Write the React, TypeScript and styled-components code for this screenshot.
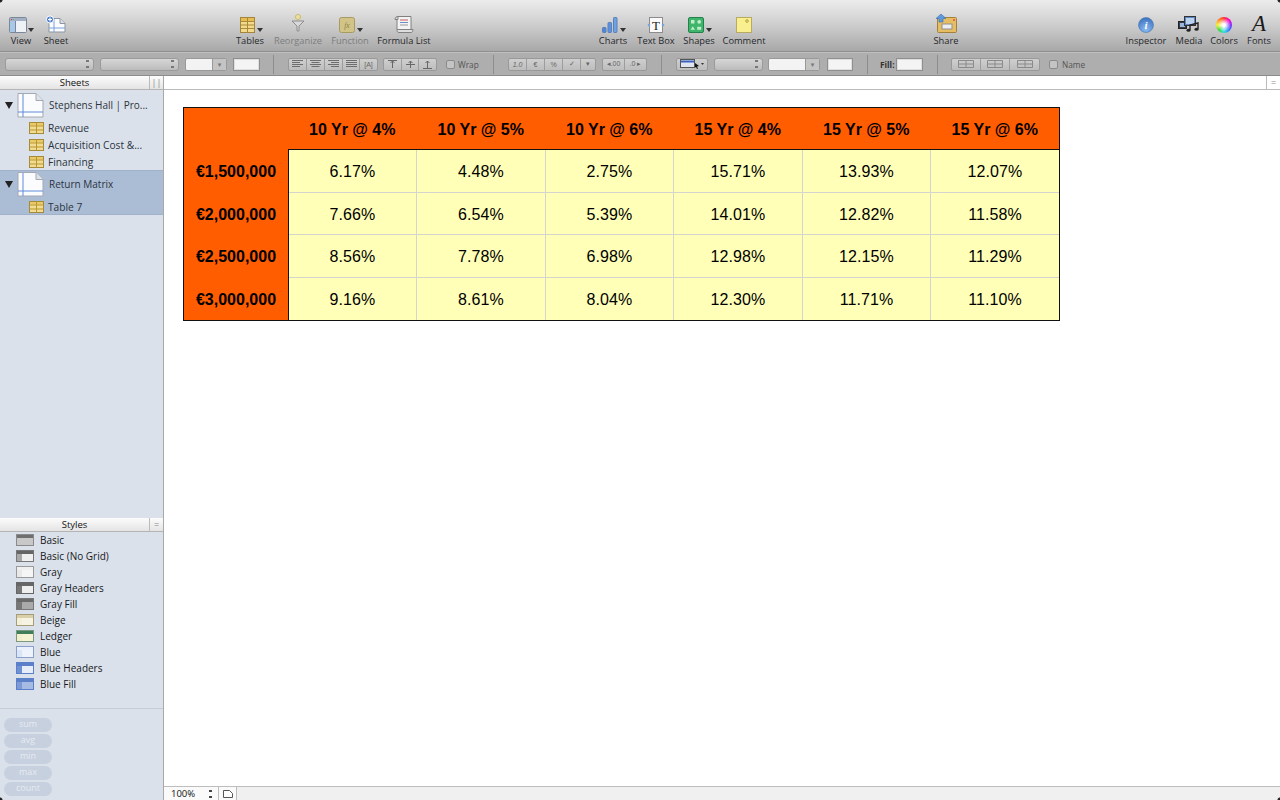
import React from 'react';
import styled, { createGlobalStyle } from 'styled-components';

const GlobalStyle = createGlobalStyle`
	html, body { margin: 0; padding: 0; background: #fff; overflow: hidden; }
	* { box-sizing: border-box; }
`;

const uiFont = `"Open Sans", "Noto Sans", "DejaVu Sans", sans-serif`;

const Window = styled.div`
	width: 1280px;
	height: 800px;
	position: relative;
	display: flex;
	flex-direction: column;
	font-family: ${uiFont};
	overflow: hidden;
	&::after {
		content: '';
		position: absolute;
		inset: 0;
		pointer-events: none;
		background:
			radial-gradient(circle at 0 0, #222 0 2px, transparent 3px),
			radial-gradient(circle at 100% 0, #222 0 2px, transparent 3px),
			radial-gradient(circle at 0 100%, #222 0 2px, transparent 3px),
			radial-gradient(circle at 100% 100%, #222 0 2px, transparent 3px);
	}
`;

const Toolbar = styled.header`
	height: 52px;
	flex: none;
	display: flex;
	padding-left: 3px;
	background: linear-gradient(#ececec 0%, #d0d0d0 45%, #a8a8a8 100%);
	border-bottom: 1px solid #8f8f8f;
`;

const ToolItem = styled.div<{ $w: number; $ml?: number; $off?: boolean }>`
	width: ${(p) => p.$w}px;
	margin-left: ${(p) => p.$ml ?? 0}px;
	flex: none;
	display: flex;
	flex-direction: column;
	align-items: center;
	color: ${(p) => (p.$off ? '#7d7d7d' : '#26272b')};
`;

const ToolIcon = styled.div<{ $caret?: boolean }>`
	height: 35px;
	width: 100%;
	display: flex;
	align-items: flex-end;
	justify-content: center;
	position: relative;
	padding-bottom: 2px;
	padding-right: ${(p) => (p.$caret ? 6 : 0)}px;
`;

const ToolLabel = styled.span`
	font-size: 9.3px;
	line-height: 11px;
	white-space: nowrap;
`;

const Caret = styled.i`
	position: absolute;
	left: 50%;
	bottom: 3px;
	margin-left: 7px;
	border: 3px solid transparent;
	border-top: 4px solid #333;
	border-bottom: 0;
`;

const FormatBar = styled.div`
	height: 24px;
	flex: none;
	display: flex;
	align-items: center;
	background: #aeaeae;
	border-top: 1px solid #c0c0c0;
	border-bottom: 1px solid #8c8c8c;
`;

const SelectBox = styled.div<{ $w: number; $ml: number }>`
	width: ${(p) => p.$w}px;
	margin-left: ${(p) => p.$ml}px;
	height: 13px;
	flex: none;
	position: relative;
	border: 1px solid #9b9b9b;
	border-radius: 3px;
	background: linear-gradient(#d6d6d6, #bcbcbc);
	&::after {
		content: '';
		position: absolute;
		right: 4px;
		top: 1px;
		width: 3px;
		height: 8px;
		background: linear-gradient(#777 0 30%, transparent 30% 70%, #777 70%);
	}
`;

const Combo = styled.div<{ $w: number; $ml: number }>`
	width: ${(p) => p.$w}px;
	margin-left: ${(p) => p.$ml}px;
	height: 13px;
	flex: none;
	display: flex;
	border: 1px solid #999;
	border-radius: 2px;
	overflow: hidden;
	background: #f3f3f3;
	&::after {
		content: '▾';
		margin-left: auto;
		width: 13px;
		font-size: 7px;
		line-height: 11px;
		text-align: center;
		color: #777;
		background: #c4c4c4;
		border-left: 1px solid #999;
	}
`;

const Swatch = styled.div<{ $w: number; $ml: number }>`
	width: ${(p) => p.$w}px;
	margin-left: ${(p) => p.$ml}px;
	height: 13px;
	flex: none;
	background: #f4f4f4;
	border: 1px solid #8f8f8f;
	box-shadow: inset 0 0 0 1px #dedede;
`;

const BarDivider = styled.div<{ $ml: number }>`
	width: 1px;
	height: 19px;
	flex: none;
	margin-left: ${(p) => p.$ml}px;
	background: #8d8d8d;
`;

const BtnGroup = styled.div<{ $ml: number }>`
	display: flex;
	flex: none;
	height: 13px;
	margin-left: ${(p) => p.$ml}px;
	border: 1px solid #999;
	border-radius: 2px;
	background: linear-gradient(#cfcfcf, #bdbdbd);
`;

const Btn = styled.div<{ $w: number }>`
	width: ${(p) => p.$w}px;
	display: flex;
	align-items: center;
	justify-content: center;
	font-size: 7px;
	color: #666;
	font-family: "Liberation Sans", sans-serif;
	white-space: nowrap;
	border-right: 1px solid #9d9d9d;
	&:last-child { border-right: 0; }
`;

const Check = styled.div<{ $ml: number }>`
	width: 9px;
	height: 9px;
	flex: none;
	margin-left: ${(p) => p.$ml}px;
	border: 1px solid #8b8b8b;
	border-radius: 2px;
	background: #c4c4c4;
`;

const BarText = styled.span<{ $ml: number; $w: number; $bold?: boolean }>`
	margin-left: ${(p) => p.$ml}px;
	width: ${(p) => p.$w}px;
	font-size: 8.3px;
	flex: none;
	white-space: nowrap;
	color: ${(p) => (p.$bold ? '#333' : '#555')};
	font-weight: ${(p) => (p.$bold ? 700 : 400)};
`;

const Body = styled.div`
	flex: 1;
	display: flex;
	min-height: 0;
`;

const Sidebar = styled.aside`
	width: 164px;
	flex: none;
	display: flex;
	flex-direction: column;
	background: #dbe1ea;
	border-right: 1px solid #a9a9a9;
`;

const PaneHead = styled.div`
	height: 14px;
	flex: none;
	position: relative;
	text-align: center;
	font-size: 9.5px;
	line-height: 13px;
	color: #111;
	padding-right: 14px;
	background: linear-gradient(#fcfcfc, #e4e4e4);
	border-bottom: 1px solid #b4b4b4;
`;

const PaneBtn = styled.div`
	position: absolute;
	top: 0;
	right: 0;
	width: 14px;
	height: 13px;
	border-left: 1px solid #bbb;
	color: #888;
	display: flex;
	align-items: center;
	justify-content: center;
	font-size: 9px;
	line-height: 1;
`;

const SheetList = styled.div`
	height: 428px;
	flex: none;
	padding-top: 1px;
`;

const Selected = styled.div`
	background: #abbcd5;
	box-shadow: inset 0 1px 0 #9fb1cb, inset 0 -1px 0 #9fb1cb;
`;

const SheetRow = styled.div`
	height: 28px;
	display: flex;
	align-items: center;
	padding-left: 5px;
	font-size: 10px;
	color: #2b3440;
	white-space: nowrap;
`;

const Tri = styled.i`
	width: 0;
	height: 0;
	border: 4px solid transparent;
	border-top: 7px solid #222;
	border-bottom: 0;
	margin-right: 4px;
`;

const TableRow = styled.div`
	height: 17px;
	display: flex;
	align-items: center;
	padding-left: 29px;
	font-size: 10.2px;
	color: #2b3440;
	white-space: nowrap;
	gap: 4px;
`;

const StyleList = styled.div`
	height: 177px;
	flex: none;
	padding-left: 16px;
	border-bottom: 1px solid #c5ccd8;
`;

const StyleRow = styled.div`
	height: 16px;
	display: flex;
	align-items: center;
	gap: 6px;
	font-size: 10px;
	color: #15181d;
	white-space: nowrap;
`;

const Thumb = styled.svg`
	width: 18px;
	height: 12px;
	flex: none;
`;

const Pills = styled.div`
	flex: 1;
	padding: 9px 0 0 4px;
	display: flex;
	flex-direction: column;
	gap: 2px;
`;

const Pill = styled.div`
	width: 48px;
	height: 14px;
	border-radius: 7px;
	background: #c6d0df;
	color: #e6ebf2;
	font-size: 9px;
	line-height: 12px;
	text-align: center;
`;

const Main = styled.main`
	flex: 1;
	min-width: 0;
	display: flex;
	flex-direction: column;
`;

const Ruler = styled.div`
	height: 14px;
	flex: none;
	position: relative;
	background: #fff;
	border-bottom: 1px solid #b9b9b9;
`;

const Canvas = styled.div`
	flex: 1;
	padding: 17px 0 0 19px;
	background: #fff;
`;

const Matrix = styled.div`
	width: 877px;
	height: 214px;
	display: grid;
	grid-template-columns: 104px 1fr;
	grid-template-rows: 41px 1fr;
	border: 1px solid #111;
	font-family: "Liberation Sans", Arial, sans-serif;
	font-size: 16px;
	background: #ff5d00;
	color: #000;
`;

const ColumnHeads = styled.div`
	display: grid;
	grid-template-columns: repeat(6, 1fr);
`;

const HeadCell = styled.div`
	display: flex;
	align-items: center;
	justify-content: center;
	padding-top: 3px;
	font-weight: 700;
	background: #ff5d00;
`;

const Cell = styled.div`
	display: flex;
	align-items: center;
	justify-content: center;
	padding-top: 3px;
	background: #ffffb8;
	border-right: 1px solid #d5d5d0;
	border-bottom: 1px solid #d5d5d0;
	letter-spacing: 0.1px;
`;

const Grid = styled.div`
	display: grid;
	grid-template-columns: 128px 129px 128px 129px 128px 128px;
	grid-template-rows: repeat(4, 1fr);
	border-top: 1px solid #111;
	border-left: 1px solid #111;
	& > :nth-child(6n) { border-right: 0; }
	& > :nth-last-child(-n + 6) { border-bottom: 0; }
`;

const RowHeads = styled.div`
	display: grid;
	grid-template-rows: repeat(4, 1fr);
`;

const StatusBar = styled.div`
	height: 14px;
	flex: none;
	display: flex;
	align-items: center;
	background: #f0f0f0;
	border-top: 1px solid #bdbdbd;
	font-size: 9.5px;
	color: #111;
`;

const Zoom = styled.div`
	width: 55px;
	height: 100%;
	padding-left: 7px;
	position: relative;
	line-height: 13px;
	background: #fafafa;
	border-right: 1px solid #bdbdbd;
	&::after {
		content: '';
		position: absolute;
		right: 6px;
		top: 3px;
		width: 3px;
		height: 8px;
		background: linear-gradient(#444 0 30%, transparent 30% 70%, #444 70%);
	}
`;

const PageBtn = styled.div`
	width: 18px;
	height: 100%;
	display: flex;
	align-items: center;
	justify-content: center;
	background: #fafafa;
	border-right: 1px solid #bdbdbd;
`;

const TableIcon = () => (
	<svg width="15" height="12" viewBox="0 0 15 12">
		<rect x=".5" y=".5" width="14" height="11" fill="#f2dc93" stroke="#a58a3a" />
		<rect x="1" y="1" width="13" height="2.5" fill="#e9c968" />
		<path d="M.5 4h14M.5 8h14M7.5 .5v11" stroke="#b8972f" fill="none" />
	</svg>
);

const PageIcon = () => (
	<svg width="27" height="25" viewBox="0 0 27 25" style={{ margin: '0 5px 0 0', flex: 'none' }}>
		<path d="M1 .5h18l7 7v16.5H1z" fill="#fbfcfd" stroke="#a3a9b3" />
		<path d="M19 .5v7h7" fill="#dfe3e8" stroke="#a3a9b3" />
		<path d="M6 1v23M1 19h25" stroke="#5f8bdc" strokeWidth="1" fill="none" />
	</svg>
);

const ViewIcon = () => (
	<svg width="18" height="16" viewBox="0 0 18 16">
		<rect x=".5" y=".5" width="17" height="15" rx="1" fill="#eef2f7" stroke="#7a8699" />
		<rect x="1" y="1" width="16" height="3" fill="#a4b0c3" />
		<rect x="1" y="4" width="5" height="11" fill="#a9c8e8" />
		<path d="M6.5 4v11" stroke="#7a8699" />
		<path d="M2 2.5h1" stroke="#e25" /><path d="M4 2.5h1" stroke="#5b5" />
	</svg>
);

const SheetIcon = () => (
	<svg width="22" height="18" viewBox="0 0 22 18">
		<path d="M4 3.5h11l5 5V17H4z" fill="#fbfcfd" stroke="#8b95a5" />
		<path d="M15 3.5v5h5" fill="#d8dde3" stroke="#8b95a5" />
		<path d="M9 4v13M4 13h16" stroke="#7da0de" />
		<circle cx="5" cy="4.5" r="3.6" fill="#4f7fc6" stroke="#fff" />
		<path d="M5 2.5v4M3 4.5h4" stroke="#fff" strokeWidth="1.2" />
	</svg>
);

const BigTable = () => (
	<svg width="15" height="16" viewBox="0 0 15 16">
		<rect x=".5" y=".5" width="14" height="15" fill="#f3d98c" stroke="#a4863a" />
		<rect x="1" y="1" width="13" height="3" fill="#e6bd55" />
		<path d="M.5 4.5h14M.5 8h14M.5 11.5h14M7.5 .5v15" stroke="#a98a36" fill="none" />
	</svg>
);

const FunnelIcon = () => (
	<svg width="14" height="19" viewBox="0 0 14 19">
		<circle cx="7" cy="3" r="2.6" fill="#ecdf9a" stroke="#c9bd7a" />
		<path d="M1 7h12L8 12v5H6v-5z" fill="#d9d9d9" stroke="#8d8d8d" />
	</svg>
);

const FunctionIcon = () => (
	<svg width="16" height="16" viewBox="0 0 16 16">
		<rect x=".5" y=".5" width="15" height="15" rx="2" fill="#d2c486" stroke="#a99a62" />
		<text x="8" y="11" fontSize="7.5" textAnchor="middle" fontStyle="italic" fontFamily="Liberation Serif, serif" fill="#8a7b45">fx</text>
	</svg>
);

const ScrollIcon = () => (
	<svg width="20" height="17" viewBox="0 0 20 17">
		<path d="M3 .5h14v13H3z" fill="#f3f3f3" stroke="#808080" />
		<path d="M1 3.5C1 1 3 .5 4 .5v3zM3 13.5h16c0 2-1 3-2 3H5c-2 0-2-2-2-3z" fill="#dedede" stroke="#808080" />
		<path d="M6 4h8" stroke="#c85a5a" /><path d="M6 6.5h8" stroke="#6a8dc5" /><path d="M6 9h8" stroke="#999" />
	</svg>
);

const ChartIcon = () => (
	<svg width="16" height="16" viewBox="0 0 16 16">
		<rect x=".5" y="10.5" width="3.5" height="5" rx=".7" fill="#4f87d6" stroke="#5a80b8" />
		<rect x="6" y="5.5" width="3.5" height="10" rx=".7" fill="#5d93de" stroke="#5a80b8" />
		<rect x="11.5" y=".5" width="3.5" height="15" rx=".7" fill="#6ea2e5" stroke="#5a80b8" />
	</svg>
);

const TextBoxIcon = () => (
	<svg width="18" height="16" viewBox="0 0 18 16">
		<rect x="2.5" y=".5" width="13" height="15" fill="#fafafa" stroke="#8c8c8c" />
		<text x="9" y="12.5" textAnchor="middle" fontSize="13" fontFamily="Liberation Serif, serif" fill="#222">T</text>
		<circle cx="2" cy="8" r="1.3" fill="#7aa3dc" /><circle cx="16" cy="8" r="1.3" fill="#7aa3dc" />
	</svg>
);

const ShapesIcon = () => (
	<svg width="16" height="16" viewBox="0 0 16 16">
		<rect x=".5" y=".5" width="15" height="15" rx="1.5" fill="#3eb56a" stroke="#23824a" />
		<rect x="3" y="3" width="3.5" height="3.5" fill="#bfeccd" />
		<circle cx="11.2" cy="4.8" r="1.9" fill="#bfeccd" />
		<path d="M4.8 9.2l2.2 3.6H2.6z" fill="#bfeccd" />
		<rect x="9.2" y="9.8" width="4" height="3" fill="#bfeccd" />
	</svg>
);

const NoteIcon = () => (
	<svg width="16" height="16" viewBox="0 0 16 16">
		<rect x=".5" y=".5" width="15" height="15" fill="#f9ef8e" stroke="#b7ab63" />
		<circle cx="11" cy="4" r="1.3" fill="none" stroke="#b49f3a" />
	</svg>
);

const ShareIcon = () => (
	<svg width="21" height="19" viewBox="0 0 21 19">
		<rect x="1.5" y="3.5" width="19" height="15" rx="1" fill="#e6bd63" stroke="#a3803c" />
		<rect x="6" y="10" width="10" height="5" fill="#efefef" stroke="#8f8f8f" />
		<path d="M5 0L10 4.5H7V8H3V4.5H0z" fill="#5f9ae0" stroke="#3a6db0" strokeWidth=".6" />
		<circle cx="18" cy="6" r="1" fill="#d9534f" />
	</svg>
);

const InfoIcon = () => (
	<svg width="16" height="16" viewBox="0 0 16 16">
		<defs>
			<radialGradient id="inf" cx=".5" cy=".8" r=".8">
				<stop offset="0" stopColor="#8bbcf2" />
				<stop offset="1" stopColor="#3a70bf" />
			</radialGradient>
		</defs>
		<circle cx="8" cy="8" r="7.5" fill="url(#inf)" stroke="#4c77b3" strokeWidth=".6" />
		<text x="8" y="12" textAnchor="middle" fontSize="11" fontWeight="700" fontStyle="italic" fontFamily="Liberation Serif, serif" fill="#fff">i</text>
	</svg>
);

const MediaIcon = () => (
	<svg width="22" height="17" viewBox="0 0 22 17">
		<rect x=".5" y="5.5" width="8" height="7" fill="#3a3f4a" stroke="#222" />
		<rect x="2" y="7" width="5" height="4" fill="#9ab8dd" />
		<rect x="6.5" y=".5" width="11" height="9" fill="#5a87c5" stroke="#333" />
		<rect x="8" y="2" width="8" height="6" fill="#b9d2ee" />
		<path d="M12 14V9l8-2v6" fill="none" stroke="#222" strokeWidth="1.4" />
		<ellipse cx="10.5" cy="14.3" rx="2" ry="1.5" fill="#222" />
		<ellipse cx="18.5" cy="13.3" rx="2" ry="1.5" fill="#222" />
	</svg>
);

const ColorWheel = styled.div`
	width: 16px;
	height: 16px;
	border-radius: 50%;
	background:
		radial-gradient(circle, #fff 0 12%, rgba(255, 255, 255, 0) 62%),
		conic-gradient(#ff2d2d, #ff00c8, #7a2dff, #2d7bff, #2de0e0, #36d936, #f5f02d, #ff8a1e, #ff2d2d);
`;

const FontGlyph = styled.span`
	font-family: "Liberation Serif", serif;
	font-style: italic;
	font-size: 23px;
	line-height: 18px;
	color: #1a1a1a;
`;

const AlignIcon = ({ kind }: { kind: 'l' | 'c' | 'r' | 'j' }) => {
	const s = kind === 'j' ? 0 : 3;
	const x = kind === 'l' ? 0 : kind === 'c' ? 1.5 : kind === 'r' ? 3 : 0;
	return (
		<svg width="11" height="8" viewBox="0 0 11 8">
			<path d={`M0 .5h11M${x} 2.5h${11 - s}M0 4.5h11M${x} 6.5h${11 - s}`} stroke="#6d6d6d" />
		</svg>
	);
};

const ValignIcon = ({ y }: { y: number }) => (
	<svg width="11" height="9" viewBox="0 0 11 9">
		<path d={`M1 ${y}.5h9`} stroke="#666" />
		<path d="M5.5 1v7M3.5 3l2-2 2 2" stroke="#666" fill="none" />
	</svg>
);

const MiniGrid = () => (
	<svg width="16" height="8" viewBox="0 0 16 8">
		<path d="M.5.5h15v7H.5zM8 .5v7M.5 4h15" stroke="#8a8a8a" fill="none" />
	</svg>
);

const tools = [
	{ label: 'View', w: 36, icon: <ViewIcon />, caret: true },
	{ label: 'Sheet', w: 34, icon: <SheetIcon /> },
	{ label: 'Tables', w: 36, ml: 159, icon: <BigTable />, caret: true },
	{ label: 'Reorganize', w: 60, icon: <FunnelIcon />, off: true },
	{ label: 'Function', w: 44, icon: <FunctionIcon />, off: true, caret: true },
	{ label: 'Formula List', w: 64, icon: <ScrollIcon /> },
	{ label: 'Charts', w: 38, ml: 158, icon: <ChartIcon />, caret: true },
	{ label: 'Text Box', w: 48, icon: <TextBoxIcon /> },
	{ label: 'Shapes', w: 38, icon: <ShapesIcon />, caret: true },
	{ label: 'Comment', w: 52, icon: <NoteIcon /> },
	{ label: 'Share', w: 40, ml: 156, icon: <ShareIcon /> },
	{ label: 'Inspector', w: 52, ml: 154, icon: <InfoIcon /> },
	{ label: 'Media', w: 34, icon: <MediaIcon /> },
	{ label: 'Colors', w: 36, icon: <ColorWheel /> },
	{ label: 'Fonts', w: 34, icon: <FontGlyph>A</FontGlyph> },
];

const tableStyles: { name: string; head: string; side: string; body: string; line: string }[] = [
	{ name: 'Basic', head: '#6f6f6f', side: '#c8c8c8', body: '#c8c8c8', line: '#8a8a8a' },
	{ name: 'Basic (No Grid)', head: '#666', side: '#a8a8a8', body: '#f0f0f0', line: '#777' },
	{ name: 'Gray', head: '#efefef', side: '#e8e8e8', body: '#f5f5f5', line: '#999' },
	{ name: 'Gray Headers', head: '#666', side: '#777', body: '#eee', line: '#666' },
	{ name: 'Gray Fill', head: '#6a6a6a', side: '#777', body: '#aaa', line: '#777' },
	{ name: 'Beige', head: '#d9cfa8', side: '#f4efda', body: '#f7f3e2', line: '#a59c78' },
	{ name: 'Ledger', head: '#3f7d5b', side: '#f3eecb', body: '#f6f2d4', line: '#7a9a80' },
	{ name: 'Blue', head: '#eaf0fb', side: '#d9e4f6', body: '#eef3fb', line: '#8ba0c8' },
	{ name: 'Blue Headers', head: '#5b7fc8', side: '#6f90d2', body: '#e6edf9', line: '#5b7fc8' },
	{ name: 'Blue Fill', head: '#5b7fc8', side: '#7d9ad6', body: '#a5bbe4', line: '#5b7fc8' },
];

const columns = ['10 Yr @ 4%', '10 Yr @ 5%', '10 Yr @ 6%', '15 Yr @ 4%', '15 Yr @ 5%', '15 Yr @ 6%'];
const rows = [
	{ label: '€1,500,000', values: ['6.17%', '4.48%', '2.75%', '15.71%', '13.93%', '12.07%'] },
	{ label: '€2,000,000', values: ['7.66%', '6.54%', '5.39%', '14.01%', '12.82%', '11.58%'] },
	{ label: '€2,500,000', values: ['8.56%', '7.78%', '6.98%', '12.98%', '12.15%', '11.29%'] },
	{ label: '€3,000,000', values: ['9.16%', '8.61%', '8.04%', '12.30%', '11.71%', '11.10%'] },
];

function App() {
	return (
		<Window>
			<GlobalStyle />
			<Toolbar>
				{tools.map((t) => (
					<ToolItem key={t.label} $w={t.w} $ml={t.ml} $off={t.off}>
						<ToolIcon $caret={t.caret}>
							{t.icon}
							{t.caret && <Caret />}
						</ToolIcon>
						<ToolLabel>{t.label}</ToolLabel>
					</ToolItem>
				))}
			</Toolbar>
			<FormatBar>
				<SelectBox $w={89} $ml={5} />
				<SelectBox $w={79} $ml={6} />
				<Combo $w={42} $ml={6} />
				<Swatch $w={27} $ml={6} />
				<BarDivider $ml={13} />
				<BtnGroup $ml={14}>
					<Btn $w={18}><AlignIcon kind="l" /></Btn>
					<Btn $w={18}><AlignIcon kind="c" /></Btn>
					<Btn $w={18}><AlignIcon kind="r" /></Btn>
					<Btn $w={17}><AlignIcon kind="j" /></Btn>
					<Btn $w={17}>[A]</Btn>
				</BtnGroup>
				<BtnGroup $ml={5}>
					<Btn $w={18}><ValignIcon y={0} /></Btn>
					<Btn $w={17}><ValignIcon y={4} /></Btn>
					<Btn $w={17}><ValignIcon y={8} /></Btn>
				</BtnGroup>
				<Check $ml={9} />
				<BarText $ml={3} $w={20}>Wrap</BarText>
				<BarDivider $ml={15} />
				<BtnGroup $ml={14}>
					<Btn $w={18}><i>1.0</i></Btn>
					<Btn $w={18}>€</Btn>
					<Btn $w={18}>%</Btn>
					<Btn $w={18}>✓</Btn>
					<Btn $w={14}>▾</Btn>
				</BtnGroup>
				<BtnGroup $ml={6}>
					<Btn $w={22}>◂.00</Btn>
					<Btn $w={21}>.0 ▸</Btn>
				</BtnGroup>
				<BarDivider $ml={14} />
				<BtnGroup $ml={14}>
					<Btn $w={30}>
						<svg width="24" height="10" viewBox="0 0 24 10">
							<rect x=".5" y=".5" width="14" height="8" fill="#dfe5f0" stroke="#555" />
							<path d="M1 2.5h13" stroke="#3a62c0" strokeWidth="2" />
							<path d="M15 4l4 3-2 .4 1 2.2-1 .4-1-2.2-1 1z" fill="#111" />
							<path d="M21 4h3l-1.5 2z" fill="#333" />
						</svg>
					</Btn>
				</BtnGroup>
				<SelectBox $w={49} $ml={6} />
				<Combo $w={52} $ml={5} />
				<Swatch $w={26} $ml={7} />
				<BarDivider $ml={14} />
				<BarText $ml={12} $w={13} $bold>Fill:</BarText>
				<Swatch $w={27} $ml={3} />
				<BarDivider $ml={14} />
				<BtnGroup $ml={13}>
					<Btn $w={29}><MiniGrid /></Btn>
					<Btn $w={29}><MiniGrid /></Btn>
					<Btn $w={29}><MiniGrid /></Btn>
				</BtnGroup>
				<Check $ml={9} />
				<BarText $ml={4} $w={24}>Name</BarText>
			</FormatBar>
			<Body>
				<Sidebar>
					<PaneHead>
						Sheets
						<PaneBtn>||</PaneBtn>
					</PaneHead>
					<SheetList>
						<SheetRow>
							<Tri />
							<PageIcon />
							Stephens Hall | Pro...
						</SheetRow>
						<TableRow><TableIcon />Revenue</TableRow>
						<TableRow><TableIcon />Acquisition Cost &...</TableRow>
						<TableRow><TableIcon />Financing</TableRow>
						<Selected>
							<SheetRow>
								<Tri />
								<PageIcon />
								Return Matrix
							</SheetRow>
							<TableRow><TableIcon />Table 7</TableRow>
						</Selected>
					</SheetList>
					<PaneHead>
						Styles
						<PaneBtn>=</PaneBtn>
					</PaneHead>
					<StyleList>
						{tableStyles.map((s) => (
							<StyleRow key={s.name}>
								<Thumb viewBox="0 0 18 12">
									<rect x=".5" y=".5" width="17" height="11" fill={s.body} stroke={s.line} />
									<rect x="1" y="1" width="16" height="3" fill={s.head} />
									<rect x="1" y="4" width="5" height="7" fill={s.side} />
								</Thumb>
								{s.name}
							</StyleRow>
						))}
					</StyleList>
					<Pills>
						{['sum', 'avg', 'min', 'max', 'count'].map((f) => (
							<Pill key={f}>{f}</Pill>
						))}
					</Pills>
				</Sidebar>
				<Main>
					<Ruler>
						<PaneBtn>=</PaneBtn>
					</Ruler>
					<Canvas>
						<Matrix>
							<HeadCell />
							<ColumnHeads>
								{columns.map((c) => (
									<HeadCell key={c}>{c}</HeadCell>
								))}
							</ColumnHeads>
							<RowHeads>
								{rows.map((r) => (
									<HeadCell key={r.label}>{r.label}</HeadCell>
								))}
							</RowHeads>
							<Grid>
								{rows.flatMap((r) =>
									r.values.map((v, i) => <Cell key={r.label + i}>{v}</Cell>),
								)}
							</Grid>
						</Matrix>
					</Canvas>
					<StatusBar>
						<Zoom>100%</Zoom>
						<PageBtn>
							<svg width="10" height="8" viewBox="0 0 10 8">
								<path d="M.5.5h6l3 3v4h-9z" fill="#fff" stroke="#555" />
							</svg>
						</PageBtn>
					</StatusBar>
				</Main>
			</Body>
		</Window>
	);
}

export default App;
